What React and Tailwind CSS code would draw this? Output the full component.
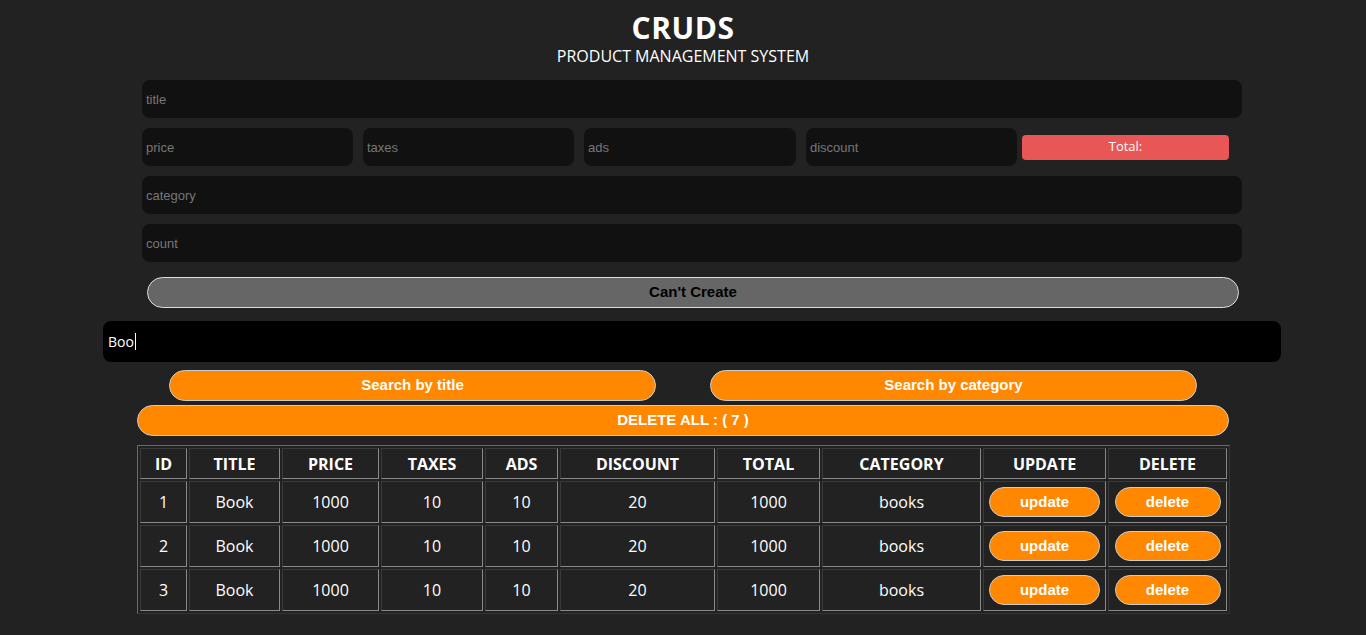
import React from 'react';

const rows = [1, 2, 3].map((id) => ({
    id,
    title: 'Book',
    price: 1000,
    taxes: 10,
    ads: 10,
    discount: 20,
    total: 1000,
    category: 'books',
}));

const heads = [
    ['ID', 'w-[47px]'],
    ['TITLE', 'w-[91px]'],
    ['PRICE', 'w-[97px]'],
    ['TAXES', 'w-[102px]'],
    ['ADS', 'w-[73px]'],
    ['DISCOUNT', 'w-[155px]'],
    ['TOTAL', 'w-[103px]'],
    ['CATEGORY', 'w-[159px]'],
    ['UPDATE', 'w-[123px]'],
    ['DELETE', 'w-[119px]'],
];

const inputCls =
    'h-[38px] bg-[#111111] rounded-lg px-1 text-[13px] text-white placeholder:text-[#777777] outline-none font-["Liberation_Sans",Arial,sans-serif]';

const cellCls = 'border border-t-[#3a3a3a] border-l-[#3a3a3a] border-b-[#8a8a8a] border-r-[#8a8a8a] text-center';

const orangeBtn =
    'bg-[#ff8800] text-white font-bold rounded-full border border-[#cccccc] font-["Liberation_Sans",Arial,sans-serif]';

const App = () => {
    return (
        <div className="min-h-[635px] w-full bg-[#222222] text-white font-['Open_Sans',sans-serif] pt-[10px] pb-4">
            <header className="text-center">
                <h1 className="text-[30px] font-bold leading-[36px] tracking-[0.5px]">CRUDS</h1>
                <p className="text-[16px] leading-[20px]">PRODUCT MANAGEMENT SYSTEM</p>
            </header>

            <div className="mt-[14px] ml-[142px] w-[1100px] flex flex-col">
                <input className={inputCls} placeholder="title" />
                <div className="mt-[10px] flex items-center gap-[10px]">
                    <input className={`${inputCls} w-[211px]`} placeholder="price" />
                    <input className={`${inputCls} w-[211px]`} placeholder="taxes" />
                    <input className={`${inputCls} w-[212px]`} placeholder="ads" />
                    <input className={`${inputCls} w-[211px]`} placeholder="discount" />
                    <div className="-ml-[5px] w-[207px] h-[25px] bg-[#e85656] rounded-[4px] flex items-center justify-center text-[13px] font-['Open_Sans',sans-serif]">
                        Total:
                    </div>
                </div>
                <input className={`${inputCls} mt-[10px]`} placeholder="category" />
                <input className={`${inputCls} mt-[10px]`} placeholder="count" />
            </div>

            <button className="mt-[15px] ml-[147px] w-[1092px] h-[31px] bg-[#666666] border border-[#dddddd] rounded-full text-black text-[15px] font-bold font-['Liberation_Sans',Arial,sans-serif]">
                Can't Create
            </button>

            <div className="mt-[13px] ml-[103px] w-[1178px] h-[41px] bg-black rounded-lg flex items-center px-[5px] text-[14px] font-['Open_Sans',sans-serif]">
                Boo<span className="inline-block w-px h-[17px] bg-white ml-px"></span>
            </div>

            <div className="mt-[8px] ml-[169px] w-[1028px] flex justify-between">
                <button className={`${orangeBtn} w-[487px] h-[31px] text-[15px]`}>Search by title</button>
                <button className={`${orangeBtn} w-[487px] h-[31px] text-[15px]`}>Search by category</button>
            </div>

            <button className={`${orangeBtn} mt-[4px] ml-[137px] w-[1092px] h-[31px] text-[15px] block`}>
                DELETE ALL : ( 7 )
            </button>

            <table className="mt-[9px] ml-[137px] w-[1090px] table-fixed border-separate border-spacing-[2px] border border-t-[#6a6a6a] border-l-[#6a6a6a] border-b-[#333333] border-r-[#333333] text-[16px] leading-[22px]">
                <thead>
                    <tr className="h-[31px]">
                        {heads.map(([h, w]) => (
                            <th key={h} className={`${cellCls} ${w} font-bold`}>
                                {h}
                            </th>
                        ))}
                    </tr>
                </thead>
                <tbody>
                    {rows.map((r) => (
                        <tr key={r.id} className="h-[42px]">
                            <td className={cellCls}>{r.id}</td>
                            <td className={cellCls}>{r.title}</td>
                            <td className={cellCls}>{r.price}</td>
                            <td className={cellCls}>{r.taxes}</td>
                            <td className={cellCls}>{r.ads}</td>
                            <td className={cellCls}>{r.discount}</td>
                            <td className={cellCls}>{r.total}</td>
                            <td className={cellCls}>{r.category}</td>
                            <td className={cellCls}>
                                <button className={`${orangeBtn} w-[111px] h-[30px] text-[15px] align-middle`}>update</button>
                            </td>
                            <td className={cellCls}>
                                <button className={`${orangeBtn} w-[106px] h-[30px] text-[15px] align-middle`}>delete</button>
                            </td>
                        </tr>
                    ))}
                </tbody>
            </table>
        </div>
    );
};

export default App;
